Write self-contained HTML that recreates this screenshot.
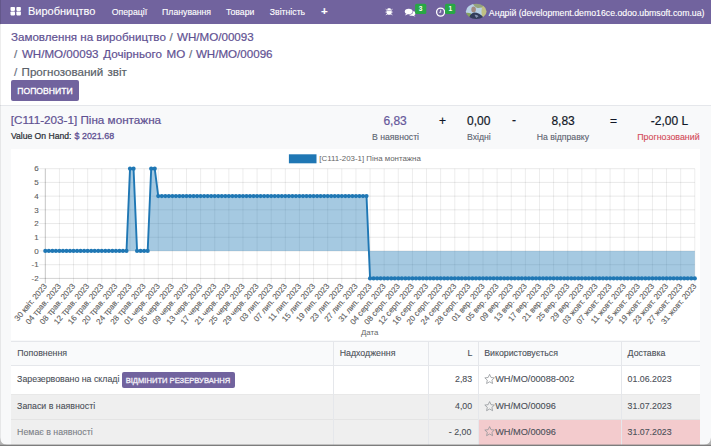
<!DOCTYPE html>
<html><head><meta charset="utf-8">
<style>
*{margin:0;padding:0;box-sizing:border-box}
html,body{width:711px;height:446px;overflow:hidden;background:#f8f9fa;font-family:"Liberation Sans",sans-serif;color:#374151}
.a{position:absolute;white-space:nowrap;line-height:1;-webkit-text-stroke:0.2px currentColor}
.lb{font-size:8.7px;color:#5c6370;-webkit-text-stroke:0.12px currentColor}
.tb .a{font-size:8.8px;color:#4b5058;-webkit-text-stroke:0.1px currentColor}
#nav{position:absolute;left:0;top:0;width:711px;height:24.5px;background:#71639e}
#nav .a{color:#fff;-webkit-text-stroke:0.12px currentColor}
#cp{position:absolute;left:0;top:24px;width:711px;height:81.9px;background:#fff;border-bottom:1px solid #e5e7eb}
.lk{color:#5f5192}
.sep{color:#6b7280}
.btn{position:absolute;background:#71639e;border-radius:2px}
#card{position:absolute;left:10.6px;top:148.5px;width:689.4px;height:191.8px;background:#fff}
svg{position:absolute;left:0;top:0}
.tk{font-family:"Liberation Sans",sans-serif;font-size:8px;fill:#5e5e5e;stroke:#5e5e5e;stroke-width:0.12px}
.lg{font-family:"Liberation Sans",sans-serif;font-size:7.9px;fill:#666}
#tbl{position:absolute;left:11px;top:340.5px;width:689.5px}
.row{position:absolute;left:11px;width:688.7px}
.vl{position:absolute;width:1px;background:#e5e7eb}
.hl{position:absolute;height:1px;background:#e5e7eb}
</style></head><body>
<div id="nav">
  <svg width="711" height="24" style="left:0;top:0">
    <rect x="10.5" y="6.9" width="4.5" height="4" rx="0.8" fill="#fff"/>
    <rect x="16.4" y="6.9" width="4.5" height="4" rx="0.8" fill="#fff"/>
    <rect x="10.5" y="11.5" width="4.5" height="3.9" rx="0.8" fill="#fff"/>
    <rect x="16.4" y="11.5" width="4.5" height="3.9" rx="0.8" fill="#fff"/>
  </svg>
  <div class="a" style="left:28px;top:6.3px;font-size:11px">Виробництво</div>
  <div class="a" style="left:111.8px;top:8.1px;font-size:8.7px">Операції</div>
  <div class="a" style="left:162.1px;top:8.1px;font-size:8.7px">Планування</div>
  <div class="a" style="left:225.9px;top:8.1px;font-size:8.7px">Товари</div>
  <div class="a" style="left:269.8px;top:8.1px;font-size:8.7px">Звітність</div>
  <div class="a" style="left:320.9px;top:6.3px;font-size:11.5px;font-weight:bold">+</div>
  <svg width="711" height="24" style="left:0;top:0">
    <!-- bug -->
    <g fill="#fff">
      <ellipse cx="389.1" cy="11.9" rx="2.5" ry="2.9"/>
      <rect x="387.4" y="8.2" width="3.4" height="1.9" rx="0.9"/>
      <path d="M385.7 9.3l1.9 1.3M392.5 9.3l-1.9 1.3M385.5 12.1h2M392.7 12.1h-2M385.8 14.9l1.9-1.3M392.4 14.9l-1.9-1.3" stroke="#fff" stroke-width="0.8"/>
    </g>
    <path d="M387 10.6h4.2" stroke="#71639e" stroke-width="0.5"/>
    <!-- chat -->
    <g fill="#fff">
      <ellipse cx="412" cy="13.4" rx="3.4" ry="2.4"/>
      <path d="M413.5 14.8 L415.5 16.7 L412.2 15.6z"/>
    </g>
    <ellipse cx="408.7" cy="11.5" rx="4.4" ry="3.2" fill="#71639e"/>
    <g fill="#fff">
      <ellipse cx="408.7" cy="11.4" rx="3.9" ry="2.75"/>
      <path d="M406.2 13.4 L405 15.6 L408.2 14z"/>
    </g>
    <rect x="415.1" y="3.7" width="11.2" height="10.4" rx="1.6" fill="#28a745"/>
    <text x="420.7" y="10.9" text-anchor="middle" font-size="6.6" font-weight="bold" fill="#fff" font-family="Liberation Sans">3</text>
    <!-- clock -->
    <circle cx="440.6" cy="12.1" r="4.0" fill="none" stroke="#fff" stroke-width="1.3"/>
    <path d="M440.7 9.8v2.5h-1.5" fill="none" stroke="#fff" stroke-width="0.8"/>
    <rect x="445" y="3.7" width="10.4" height="10.2" rx="1.6" fill="#28a745"/>
    <text x="450.3" y="10.9" text-anchor="middle" font-size="6.6" font-weight="bold" fill="#fff" font-family="Liberation Sans">1</text>
    <!-- avatar -->
    <defs><clipPath id="av"><ellipse cx="476.2" cy="11.45" rx="10.35" ry="7.65"/></clipPath>
    <filter id="bl" x="-10%" y="-10%" width="120%" height="120%"><feGaussianBlur stdDeviation="0.45"/></filter></defs>
    <g clip-path="url(#av)"><g filter="url(#bl)">
      <rect x="464" y="2" width="25" height="20" fill="#b9d1e6"/>
      <path d="M475 2 L489 2 L489 19 L483 19 Q480.5 12 482 8z" fill="#bfc084"/>
      <path d="M472 2 Q474 7 477.5 8 Q481 8.5 484 5.5 L485 2z" fill="#94a37c"/>
      <path d="M464 13.5 Q467.5 12 471 13.5 L471 21 L464 21z" fill="#86a35f"/>
      <ellipse cx="473.6" cy="9.4" rx="2.3" ry="2.9" fill="#a38b80"/>
      <path d="M468.5 21 Q469 13.8 474 12.6 Q479.5 12.6 483.5 17.5 L484 21z" fill="#303c5a"/>
      <path d="M474.5 14.8 Q477.5 14.2 478.5 16.2 L476.2 18z" fill="#8391ad"/>
    </g></g>
  </svg>
  <div class="a" style="left:488.8px;top:8.5px;font-size:8.76px">Андрій (development.demo16ce.odoo.ubmsoft.com.ua)</div>
</div>

<div id="cp"></div>
<div class="a lk" style="left:11px;top:31.1px;font-size:11.6px">Замовлення на виробництво</div>
<div class="a sep" style="left:169.5px;top:31.1px;font-size:11.6px">/</div>
<div class="a lk" style="left:177px;top:31.1px;font-size:11.6px">WH/MO/00093</div>
<div class="a sep" style="left:14.1px;top:48px;font-size:11.6px">/</div>
<div class="a lk" style="left:21.9px;top:48px;font-size:11.6px;word-spacing:1.5px">WH/MO/00093 Дочірнього МО</div>
<div class="a sep" style="left:189.1px;top:48px;font-size:11.6px">/</div>
<div class="a lk" style="left:195.9px;top:48px;font-size:11.6px">WH/MO/00096</div>
<div class="a sep" style="left:14.1px;top:65.5px;font-size:11.6px">/</div>
<div class="a" style="left:21.6px;top:65.5px;font-size:11.6px;color:#5a5f69;word-spacing:1px">Прогнозований звіт</div>
<div class="btn" style="left:10.8px;top:80.1px;width:68px;height:21.1px"></div>
<div class="a" style="left:17.3px;top:87px;font-size:8.6px;color:#fff;-webkit-text-stroke:0.32px currentColor">ПОПОВНИТИ</div>

<div class="a lk" style="left:10.7px;top:113.8px;font-size:11.7px">[C111-203-1] Піна монтажна</div>
<div class="a" style="left:10.9px;top:132.2px;font-size:8.6px;color:#2b2f36;-webkit-text-stroke:0.22px currentColor">Value On Hand:</div><div class="a lk" style="left:74.6px;top:132.2px;font-size:8.9px;-webkit-text-stroke:0.3px currentColor">$ 2021.68</div>

<div class="a lk" style="left:383.4px;top:114.5px;font-size:12px;color:#66589a">6,83</div>
<div class="a lb" style="left:372px;top:133px">В наявності</div>
<div class="a" style="left:439px;top:114.5px;font-size:12px;color:#111827">+</div>
<div class="a" style="left:467px;top:114.5px;font-size:12px;color:#111827">0,00</div>
<div class="a lb" style="left:467px;top:133px">Вхідні</div>
<div class="a" style="left:512px;top:113.8px;font-size:12px;color:#111827">-</div>
<div class="a" style="left:551.4px;top:114.5px;font-size:12px;color:#111827">8,83</div>
<div class="a lb" style="left:536.7px;top:133px">На відправку</div>
<div class="a" style="left:610px;top:114.5px;font-size:12px;color:#111827">=</div>
<div class="a" style="left:650.8px;top:114.5px;font-size:12px;color:#111827">-2,00 L</div>
<div class="a lb" style="left:637.2px;top:133px;font-size:8.9px;color:#d44c59">Прогнозований</div>

<div id="card"></div>
<svg width="711" height="446">
<line x1="39.3" y1="168.70" x2="694.80" y2="168.70" stroke="rgba(0,0,0,0.1)" stroke-width="0.9"/>
<line x1="39.3" y1="182.41" x2="694.80" y2="182.41" stroke="rgba(0,0,0,0.1)" stroke-width="0.9"/>
<line x1="39.3" y1="196.12" x2="694.80" y2="196.12" stroke="rgba(0,0,0,0.1)" stroke-width="0.9"/>
<line x1="39.3" y1="209.84" x2="694.80" y2="209.84" stroke="rgba(0,0,0,0.1)" stroke-width="0.9"/>
<line x1="39.3" y1="223.55" x2="694.80" y2="223.55" stroke="rgba(0,0,0,0.1)" stroke-width="0.9"/>
<line x1="39.3" y1="237.26" x2="694.80" y2="237.26" stroke="rgba(0,0,0,0.1)" stroke-width="0.9"/>
<line x1="39.3" y1="250.97" x2="694.80" y2="250.97" stroke="rgba(0,0,0,0.1)" stroke-width="0.9"/>
<line x1="39.3" y1="264.69" x2="694.80" y2="264.69" stroke="rgba(0,0,0,0.1)" stroke-width="0.9"/>
<line x1="39.3" y1="278.40" x2="694.80" y2="278.40" stroke="rgba(0,0,0,0.2)" stroke-width="0.9"/>
<line x1="45.30" y1="168.70" x2="45.30" y2="283.40" stroke="rgba(0,0,0,0.26)" stroke-width="0.9"/>
<line x1="59.42" y1="168.70" x2="59.42" y2="283.40" stroke="rgba(0,0,0,0.085)" stroke-width="0.9"/>
<line x1="73.54" y1="168.70" x2="73.54" y2="283.40" stroke="rgba(0,0,0,0.085)" stroke-width="0.9"/>
<line x1="87.66" y1="168.70" x2="87.66" y2="283.40" stroke="rgba(0,0,0,0.085)" stroke-width="0.9"/>
<line x1="101.78" y1="168.70" x2="101.78" y2="283.40" stroke="rgba(0,0,0,0.085)" stroke-width="0.9"/>
<line x1="115.90" y1="168.70" x2="115.90" y2="283.40" stroke="rgba(0,0,0,0.085)" stroke-width="0.9"/>
<line x1="130.02" y1="168.70" x2="130.02" y2="283.40" stroke="rgba(0,0,0,0.085)" stroke-width="0.9"/>
<line x1="144.14" y1="168.70" x2="144.14" y2="283.40" stroke="rgba(0,0,0,0.085)" stroke-width="0.9"/>
<line x1="158.26" y1="168.70" x2="158.26" y2="283.40" stroke="rgba(0,0,0,0.085)" stroke-width="0.9"/>
<line x1="172.38" y1="168.70" x2="172.38" y2="283.40" stroke="rgba(0,0,0,0.085)" stroke-width="0.9"/>
<line x1="186.50" y1="168.70" x2="186.50" y2="283.40" stroke="rgba(0,0,0,0.085)" stroke-width="0.9"/>
<line x1="200.62" y1="168.70" x2="200.62" y2="283.40" stroke="rgba(0,0,0,0.085)" stroke-width="0.9"/>
<line x1="214.73" y1="168.70" x2="214.73" y2="283.40" stroke="rgba(0,0,0,0.085)" stroke-width="0.9"/>
<line x1="228.85" y1="168.70" x2="228.85" y2="283.40" stroke="rgba(0,0,0,0.085)" stroke-width="0.9"/>
<line x1="242.97" y1="168.70" x2="242.97" y2="283.40" stroke="rgba(0,0,0,0.085)" stroke-width="0.9"/>
<line x1="257.09" y1="168.70" x2="257.09" y2="283.40" stroke="rgba(0,0,0,0.085)" stroke-width="0.9"/>
<line x1="271.21" y1="168.70" x2="271.21" y2="283.40" stroke="rgba(0,0,0,0.085)" stroke-width="0.9"/>
<line x1="285.33" y1="168.70" x2="285.33" y2="283.40" stroke="rgba(0,0,0,0.085)" stroke-width="0.9"/>
<line x1="299.45" y1="168.70" x2="299.45" y2="283.40" stroke="rgba(0,0,0,0.085)" stroke-width="0.9"/>
<line x1="313.57" y1="168.70" x2="313.57" y2="283.40" stroke="rgba(0,0,0,0.085)" stroke-width="0.9"/>
<line x1="327.69" y1="168.70" x2="327.69" y2="283.40" stroke="rgba(0,0,0,0.085)" stroke-width="0.9"/>
<line x1="341.81" y1="168.70" x2="341.81" y2="283.40" stroke="rgba(0,0,0,0.085)" stroke-width="0.9"/>
<line x1="355.93" y1="168.70" x2="355.93" y2="283.40" stroke="rgba(0,0,0,0.085)" stroke-width="0.9"/>
<line x1="370.05" y1="168.70" x2="370.05" y2="283.40" stroke="rgba(0,0,0,0.085)" stroke-width="0.9"/>
<line x1="384.17" y1="168.70" x2="384.17" y2="283.40" stroke="rgba(0,0,0,0.085)" stroke-width="0.9"/>
<line x1="398.29" y1="168.70" x2="398.29" y2="283.40" stroke="rgba(0,0,0,0.085)" stroke-width="0.9"/>
<line x1="412.41" y1="168.70" x2="412.41" y2="283.40" stroke="rgba(0,0,0,0.085)" stroke-width="0.9"/>
<line x1="426.53" y1="168.70" x2="426.53" y2="283.40" stroke="rgba(0,0,0,0.085)" stroke-width="0.9"/>
<line x1="440.65" y1="168.70" x2="440.65" y2="283.40" stroke="rgba(0,0,0,0.085)" stroke-width="0.9"/>
<line x1="454.77" y1="168.70" x2="454.77" y2="283.40" stroke="rgba(0,0,0,0.085)" stroke-width="0.9"/>
<line x1="468.89" y1="168.70" x2="468.89" y2="283.40" stroke="rgba(0,0,0,0.085)" stroke-width="0.9"/>
<line x1="483.01" y1="168.70" x2="483.01" y2="283.40" stroke="rgba(0,0,0,0.085)" stroke-width="0.9"/>
<line x1="497.13" y1="168.70" x2="497.13" y2="283.40" stroke="rgba(0,0,0,0.085)" stroke-width="0.9"/>
<line x1="511.25" y1="168.70" x2="511.25" y2="283.40" stroke="rgba(0,0,0,0.085)" stroke-width="0.9"/>
<line x1="525.37" y1="168.70" x2="525.37" y2="283.40" stroke="rgba(0,0,0,0.085)" stroke-width="0.9"/>
<line x1="539.48" y1="168.70" x2="539.48" y2="283.40" stroke="rgba(0,0,0,0.085)" stroke-width="0.9"/>
<line x1="553.60" y1="168.70" x2="553.60" y2="283.40" stroke="rgba(0,0,0,0.085)" stroke-width="0.9"/>
<line x1="567.72" y1="168.70" x2="567.72" y2="283.40" stroke="rgba(0,0,0,0.085)" stroke-width="0.9"/>
<line x1="581.84" y1="168.70" x2="581.84" y2="283.40" stroke="rgba(0,0,0,0.085)" stroke-width="0.9"/>
<line x1="595.96" y1="168.70" x2="595.96" y2="283.40" stroke="rgba(0,0,0,0.085)" stroke-width="0.9"/>
<line x1="610.08" y1="168.70" x2="610.08" y2="283.40" stroke="rgba(0,0,0,0.085)" stroke-width="0.9"/>
<line x1="624.20" y1="168.70" x2="624.20" y2="283.40" stroke="rgba(0,0,0,0.085)" stroke-width="0.9"/>
<line x1="638.32" y1="168.70" x2="638.32" y2="283.40" stroke="rgba(0,0,0,0.085)" stroke-width="0.9"/>
<line x1="652.44" y1="168.70" x2="652.44" y2="283.40" stroke="rgba(0,0,0,0.085)" stroke-width="0.9"/>
<line x1="666.56" y1="168.70" x2="666.56" y2="283.40" stroke="rgba(0,0,0,0.085)" stroke-width="0.9"/>
<line x1="680.68" y1="168.70" x2="680.68" y2="283.40" stroke="rgba(0,0,0,0.085)" stroke-width="0.9"/>
<line x1="694.80" y1="168.70" x2="694.80" y2="283.40" stroke="rgba(0,0,0,0.085)" stroke-width="0.9"/>
<text x="38.6" y="168.70" dy="0.34em" text-anchor="end" class="tk">6</text>
<text x="38.6" y="182.41" dy="0.34em" text-anchor="end" class="tk">5</text>
<text x="38.6" y="196.12" dy="0.34em" text-anchor="end" class="tk">4</text>
<text x="38.6" y="209.84" dy="0.34em" text-anchor="end" class="tk">3</text>
<text x="38.6" y="223.55" dy="0.34em" text-anchor="end" class="tk">2</text>
<text x="38.6" y="237.26" dy="0.34em" text-anchor="end" class="tk">1</text>
<text x="38.6" y="250.97" dy="0.34em" text-anchor="end" class="tk">0</text>
<text x="38.6" y="264.69" dy="0.34em" text-anchor="end" class="tk">-1</text>
<text x="38.6" y="278.40" dy="0.34em" text-anchor="end" class="tk">-2</text>
<path d="M45.30,250.97 L45.30,250.97 L48.83,250.97 L52.36,250.97 L55.89,250.97 L59.42,250.97 L62.95,250.97 L66.48,250.97 L70.01,250.97 L73.54,250.97 L77.07,250.97 L80.60,250.97 L84.13,250.97 L87.66,250.97 L91.19,250.97 L94.72,250.97 L98.25,250.97 L101.78,250.97 L105.31,250.97 L108.84,250.97 L112.37,250.97 L115.90,250.97 L119.43,250.97 L122.96,250.97 L126.49,250.97 L130.02,168.70 L133.55,168.70 L137.08,250.97 L140.61,250.97 L144.14,250.97 L147.67,250.97 L151.20,168.70 L154.73,168.70 L158.26,196.12 L161.79,196.12 L165.32,196.12 L168.85,196.12 L172.38,196.12 L175.91,196.12 L179.44,196.12 L182.97,196.12 L186.50,196.12 L190.03,196.12 L193.56,196.12 L197.09,196.12 L200.62,196.12 L204.15,196.12 L207.68,196.12 L211.20,196.12 L214.73,196.12 L218.26,196.12 L221.79,196.12 L225.32,196.12 L228.85,196.12 L232.38,196.12 L235.91,196.12 L239.44,196.12 L242.97,196.12 L246.50,196.12 L250.03,196.12 L253.56,196.12 L257.09,196.12 L260.62,196.12 L264.15,196.12 L267.68,196.12 L271.21,196.12 L274.74,196.12 L278.27,196.12 L281.80,196.12 L285.33,196.12 L288.86,196.12 L292.39,196.12 L295.92,196.12 L299.45,196.12 L302.98,196.12 L306.51,196.12 L310.04,196.12 L313.57,196.12 L317.10,196.12 L320.63,196.12 L324.16,196.12 L327.69,196.12 L331.22,196.12 L334.75,196.12 L338.28,196.12 L341.81,196.12 L345.34,196.12 L348.87,196.12 L352.40,196.12 L355.93,196.12 L359.46,196.12 L362.99,196.12 L366.52,196.12 L370.05,278.40 L373.58,278.40 L377.11,278.40 L380.64,278.40 L384.17,278.40 L387.70,278.40 L391.23,278.40 L394.76,278.40 L398.29,278.40 L401.82,278.40 L405.35,278.40 L408.88,278.40 L412.41,278.40 L415.94,278.40 L419.47,278.40 L423.00,278.40 L426.53,278.40 L430.06,278.40 L433.59,278.40 L437.12,278.40 L440.65,278.40 L444.18,278.40 L447.71,278.40 L451.24,278.40 L454.77,278.40 L458.30,278.40 L461.83,278.40 L465.36,278.40 L468.89,278.40 L472.42,278.40 L475.95,278.40 L479.48,278.40 L483.01,278.40 L486.54,278.40 L490.07,278.40 L493.60,278.40 L497.13,278.40 L500.66,278.40 L504.19,278.40 L507.72,278.40 L511.25,278.40 L514.78,278.40 L518.31,278.40 L521.84,278.40 L525.37,278.40 L528.90,278.40 L532.42,278.40 L535.95,278.40 L539.48,278.40 L543.01,278.40 L546.54,278.40 L550.07,278.40 L553.60,278.40 L557.13,278.40 L560.66,278.40 L564.19,278.40 L567.72,278.40 L571.25,278.40 L574.78,278.40 L578.31,278.40 L581.84,278.40 L585.37,278.40 L588.90,278.40 L592.43,278.40 L595.96,278.40 L599.49,278.40 L603.02,278.40 L606.55,278.40 L610.08,278.40 L613.61,278.40 L617.14,278.40 L620.67,278.40 L624.20,278.40 L627.73,278.40 L631.26,278.40 L634.79,278.40 L638.32,278.40 L641.85,278.40 L645.38,278.40 L648.91,278.40 L652.44,278.40 L655.97,278.40 L659.50,278.40 L663.03,278.40 L666.56,278.40 L670.09,278.40 L673.62,278.40 L677.15,278.40 L680.68,278.40 L684.21,278.40 L687.74,278.40 L691.27,278.40 L694.80,278.40 L694.80,250.97 Z" fill="rgba(31,119,180,0.4)"/>
<path d="M45.30,250.97 L48.83,250.97 L52.36,250.97 L55.89,250.97 L59.42,250.97 L62.95,250.97 L66.48,250.97 L70.01,250.97 L73.54,250.97 L77.07,250.97 L80.60,250.97 L84.13,250.97 L87.66,250.97 L91.19,250.97 L94.72,250.97 L98.25,250.97 L101.78,250.97 L105.31,250.97 L108.84,250.97 L112.37,250.97 L115.90,250.97 L119.43,250.97 L122.96,250.97 L126.49,250.97 L130.02,168.70 L133.55,168.70 L137.08,250.97 L140.61,250.97 L144.14,250.97 L147.67,250.97 L151.20,168.70 L154.73,168.70 L158.26,196.12 L161.79,196.12 L165.32,196.12 L168.85,196.12 L172.38,196.12 L175.91,196.12 L179.44,196.12 L182.97,196.12 L186.50,196.12 L190.03,196.12 L193.56,196.12 L197.09,196.12 L200.62,196.12 L204.15,196.12 L207.68,196.12 L211.20,196.12 L214.73,196.12 L218.26,196.12 L221.79,196.12 L225.32,196.12 L228.85,196.12 L232.38,196.12 L235.91,196.12 L239.44,196.12 L242.97,196.12 L246.50,196.12 L250.03,196.12 L253.56,196.12 L257.09,196.12 L260.62,196.12 L264.15,196.12 L267.68,196.12 L271.21,196.12 L274.74,196.12 L278.27,196.12 L281.80,196.12 L285.33,196.12 L288.86,196.12 L292.39,196.12 L295.92,196.12 L299.45,196.12 L302.98,196.12 L306.51,196.12 L310.04,196.12 L313.57,196.12 L317.10,196.12 L320.63,196.12 L324.16,196.12 L327.69,196.12 L331.22,196.12 L334.75,196.12 L338.28,196.12 L341.81,196.12 L345.34,196.12 L348.87,196.12 L352.40,196.12 L355.93,196.12 L359.46,196.12 L362.99,196.12 L366.52,196.12 L370.05,278.40 L373.58,278.40 L377.11,278.40 L380.64,278.40 L384.17,278.40 L387.70,278.40 L391.23,278.40 L394.76,278.40 L398.29,278.40 L401.82,278.40 L405.35,278.40 L408.88,278.40 L412.41,278.40 L415.94,278.40 L419.47,278.40 L423.00,278.40 L426.53,278.40 L430.06,278.40 L433.59,278.40 L437.12,278.40 L440.65,278.40 L444.18,278.40 L447.71,278.40 L451.24,278.40 L454.77,278.40 L458.30,278.40 L461.83,278.40 L465.36,278.40 L468.89,278.40 L472.42,278.40 L475.95,278.40 L479.48,278.40 L483.01,278.40 L486.54,278.40 L490.07,278.40 L493.60,278.40 L497.13,278.40 L500.66,278.40 L504.19,278.40 L507.72,278.40 L511.25,278.40 L514.78,278.40 L518.31,278.40 L521.84,278.40 L525.37,278.40 L528.90,278.40 L532.42,278.40 L535.95,278.40 L539.48,278.40 L543.01,278.40 L546.54,278.40 L550.07,278.40 L553.60,278.40 L557.13,278.40 L560.66,278.40 L564.19,278.40 L567.72,278.40 L571.25,278.40 L574.78,278.40 L578.31,278.40 L581.84,278.40 L585.37,278.40 L588.90,278.40 L592.43,278.40 L595.96,278.40 L599.49,278.40 L603.02,278.40 L606.55,278.40 L610.08,278.40 L613.61,278.40 L617.14,278.40 L620.67,278.40 L624.20,278.40 L627.73,278.40 L631.26,278.40 L634.79,278.40 L638.32,278.40 L641.85,278.40 L645.38,278.40 L648.91,278.40 L652.44,278.40 L655.97,278.40 L659.50,278.40 L663.03,278.40 L666.56,278.40 L670.09,278.40 L673.62,278.40 L677.15,278.40 L680.68,278.40 L684.21,278.40 L687.74,278.40 L691.27,278.40 L694.80,278.40" fill="none" stroke="#1f77b4" stroke-width="1.9" stroke-linejoin="round"/>
<circle cx="45.30" cy="250.97" r="2.1" fill="#1f77b4"/>
<circle cx="48.83" cy="250.97" r="2.1" fill="#1f77b4"/>
<circle cx="52.36" cy="250.97" r="2.1" fill="#1f77b4"/>
<circle cx="55.89" cy="250.97" r="2.1" fill="#1f77b4"/>
<circle cx="59.42" cy="250.97" r="2.1" fill="#1f77b4"/>
<circle cx="62.95" cy="250.97" r="2.1" fill="#1f77b4"/>
<circle cx="66.48" cy="250.97" r="2.1" fill="#1f77b4"/>
<circle cx="70.01" cy="250.97" r="2.1" fill="#1f77b4"/>
<circle cx="73.54" cy="250.97" r="2.1" fill="#1f77b4"/>
<circle cx="77.07" cy="250.97" r="2.1" fill="#1f77b4"/>
<circle cx="80.60" cy="250.97" r="2.1" fill="#1f77b4"/>
<circle cx="84.13" cy="250.97" r="2.1" fill="#1f77b4"/>
<circle cx="87.66" cy="250.97" r="2.1" fill="#1f77b4"/>
<circle cx="91.19" cy="250.97" r="2.1" fill="#1f77b4"/>
<circle cx="94.72" cy="250.97" r="2.1" fill="#1f77b4"/>
<circle cx="98.25" cy="250.97" r="2.1" fill="#1f77b4"/>
<circle cx="101.78" cy="250.97" r="2.1" fill="#1f77b4"/>
<circle cx="105.31" cy="250.97" r="2.1" fill="#1f77b4"/>
<circle cx="108.84" cy="250.97" r="2.1" fill="#1f77b4"/>
<circle cx="112.37" cy="250.97" r="2.1" fill="#1f77b4"/>
<circle cx="115.90" cy="250.97" r="2.1" fill="#1f77b4"/>
<circle cx="119.43" cy="250.97" r="2.1" fill="#1f77b4"/>
<circle cx="122.96" cy="250.97" r="2.1" fill="#1f77b4"/>
<circle cx="126.49" cy="250.97" r="2.1" fill="#1f77b4"/>
<circle cx="130.02" cy="168.70" r="2.1" fill="#1f77b4"/>
<circle cx="133.55" cy="168.70" r="2.1" fill="#1f77b4"/>
<circle cx="137.08" cy="250.97" r="2.1" fill="#1f77b4"/>
<circle cx="140.61" cy="250.97" r="2.1" fill="#1f77b4"/>
<circle cx="144.14" cy="250.97" r="2.1" fill="#1f77b4"/>
<circle cx="147.67" cy="250.97" r="2.1" fill="#1f77b4"/>
<circle cx="151.20" cy="168.70" r="2.1" fill="#1f77b4"/>
<circle cx="154.73" cy="168.70" r="2.1" fill="#1f77b4"/>
<circle cx="158.26" cy="196.12" r="2.1" fill="#1f77b4"/>
<circle cx="161.79" cy="196.12" r="2.1" fill="#1f77b4"/>
<circle cx="165.32" cy="196.12" r="2.1" fill="#1f77b4"/>
<circle cx="168.85" cy="196.12" r="2.1" fill="#1f77b4"/>
<circle cx="172.38" cy="196.12" r="2.1" fill="#1f77b4"/>
<circle cx="175.91" cy="196.12" r="2.1" fill="#1f77b4"/>
<circle cx="179.44" cy="196.12" r="2.1" fill="#1f77b4"/>
<circle cx="182.97" cy="196.12" r="2.1" fill="#1f77b4"/>
<circle cx="186.50" cy="196.12" r="2.1" fill="#1f77b4"/>
<circle cx="190.03" cy="196.12" r="2.1" fill="#1f77b4"/>
<circle cx="193.56" cy="196.12" r="2.1" fill="#1f77b4"/>
<circle cx="197.09" cy="196.12" r="2.1" fill="#1f77b4"/>
<circle cx="200.62" cy="196.12" r="2.1" fill="#1f77b4"/>
<circle cx="204.15" cy="196.12" r="2.1" fill="#1f77b4"/>
<circle cx="207.68" cy="196.12" r="2.1" fill="#1f77b4"/>
<circle cx="211.20" cy="196.12" r="2.1" fill="#1f77b4"/>
<circle cx="214.73" cy="196.12" r="2.1" fill="#1f77b4"/>
<circle cx="218.26" cy="196.12" r="2.1" fill="#1f77b4"/>
<circle cx="221.79" cy="196.12" r="2.1" fill="#1f77b4"/>
<circle cx="225.32" cy="196.12" r="2.1" fill="#1f77b4"/>
<circle cx="228.85" cy="196.12" r="2.1" fill="#1f77b4"/>
<circle cx="232.38" cy="196.12" r="2.1" fill="#1f77b4"/>
<circle cx="235.91" cy="196.12" r="2.1" fill="#1f77b4"/>
<circle cx="239.44" cy="196.12" r="2.1" fill="#1f77b4"/>
<circle cx="242.97" cy="196.12" r="2.1" fill="#1f77b4"/>
<circle cx="246.50" cy="196.12" r="2.1" fill="#1f77b4"/>
<circle cx="250.03" cy="196.12" r="2.1" fill="#1f77b4"/>
<circle cx="253.56" cy="196.12" r="2.1" fill="#1f77b4"/>
<circle cx="257.09" cy="196.12" r="2.1" fill="#1f77b4"/>
<circle cx="260.62" cy="196.12" r="2.1" fill="#1f77b4"/>
<circle cx="264.15" cy="196.12" r="2.1" fill="#1f77b4"/>
<circle cx="267.68" cy="196.12" r="2.1" fill="#1f77b4"/>
<circle cx="271.21" cy="196.12" r="2.1" fill="#1f77b4"/>
<circle cx="274.74" cy="196.12" r="2.1" fill="#1f77b4"/>
<circle cx="278.27" cy="196.12" r="2.1" fill="#1f77b4"/>
<circle cx="281.80" cy="196.12" r="2.1" fill="#1f77b4"/>
<circle cx="285.33" cy="196.12" r="2.1" fill="#1f77b4"/>
<circle cx="288.86" cy="196.12" r="2.1" fill="#1f77b4"/>
<circle cx="292.39" cy="196.12" r="2.1" fill="#1f77b4"/>
<circle cx="295.92" cy="196.12" r="2.1" fill="#1f77b4"/>
<circle cx="299.45" cy="196.12" r="2.1" fill="#1f77b4"/>
<circle cx="302.98" cy="196.12" r="2.1" fill="#1f77b4"/>
<circle cx="306.51" cy="196.12" r="2.1" fill="#1f77b4"/>
<circle cx="310.04" cy="196.12" r="2.1" fill="#1f77b4"/>
<circle cx="313.57" cy="196.12" r="2.1" fill="#1f77b4"/>
<circle cx="317.10" cy="196.12" r="2.1" fill="#1f77b4"/>
<circle cx="320.63" cy="196.12" r="2.1" fill="#1f77b4"/>
<circle cx="324.16" cy="196.12" r="2.1" fill="#1f77b4"/>
<circle cx="327.69" cy="196.12" r="2.1" fill="#1f77b4"/>
<circle cx="331.22" cy="196.12" r="2.1" fill="#1f77b4"/>
<circle cx="334.75" cy="196.12" r="2.1" fill="#1f77b4"/>
<circle cx="338.28" cy="196.12" r="2.1" fill="#1f77b4"/>
<circle cx="341.81" cy="196.12" r="2.1" fill="#1f77b4"/>
<circle cx="345.34" cy="196.12" r="2.1" fill="#1f77b4"/>
<circle cx="348.87" cy="196.12" r="2.1" fill="#1f77b4"/>
<circle cx="352.40" cy="196.12" r="2.1" fill="#1f77b4"/>
<circle cx="355.93" cy="196.12" r="2.1" fill="#1f77b4"/>
<circle cx="359.46" cy="196.12" r="2.1" fill="#1f77b4"/>
<circle cx="362.99" cy="196.12" r="2.1" fill="#1f77b4"/>
<circle cx="366.52" cy="196.12" r="2.1" fill="#1f77b4"/>
<circle cx="370.05" cy="278.40" r="2.1" fill="#1f77b4"/>
<circle cx="373.58" cy="278.40" r="2.1" fill="#1f77b4"/>
<circle cx="377.11" cy="278.40" r="2.1" fill="#1f77b4"/>
<circle cx="380.64" cy="278.40" r="2.1" fill="#1f77b4"/>
<circle cx="384.17" cy="278.40" r="2.1" fill="#1f77b4"/>
<circle cx="387.70" cy="278.40" r="2.1" fill="#1f77b4"/>
<circle cx="391.23" cy="278.40" r="2.1" fill="#1f77b4"/>
<circle cx="394.76" cy="278.40" r="2.1" fill="#1f77b4"/>
<circle cx="398.29" cy="278.40" r="2.1" fill="#1f77b4"/>
<circle cx="401.82" cy="278.40" r="2.1" fill="#1f77b4"/>
<circle cx="405.35" cy="278.40" r="2.1" fill="#1f77b4"/>
<circle cx="408.88" cy="278.40" r="2.1" fill="#1f77b4"/>
<circle cx="412.41" cy="278.40" r="2.1" fill="#1f77b4"/>
<circle cx="415.94" cy="278.40" r="2.1" fill="#1f77b4"/>
<circle cx="419.47" cy="278.40" r="2.1" fill="#1f77b4"/>
<circle cx="423.00" cy="278.40" r="2.1" fill="#1f77b4"/>
<circle cx="426.53" cy="278.40" r="2.1" fill="#1f77b4"/>
<circle cx="430.06" cy="278.40" r="2.1" fill="#1f77b4"/>
<circle cx="433.59" cy="278.40" r="2.1" fill="#1f77b4"/>
<circle cx="437.12" cy="278.40" r="2.1" fill="#1f77b4"/>
<circle cx="440.65" cy="278.40" r="2.1" fill="#1f77b4"/>
<circle cx="444.18" cy="278.40" r="2.1" fill="#1f77b4"/>
<circle cx="447.71" cy="278.40" r="2.1" fill="#1f77b4"/>
<circle cx="451.24" cy="278.40" r="2.1" fill="#1f77b4"/>
<circle cx="454.77" cy="278.40" r="2.1" fill="#1f77b4"/>
<circle cx="458.30" cy="278.40" r="2.1" fill="#1f77b4"/>
<circle cx="461.83" cy="278.40" r="2.1" fill="#1f77b4"/>
<circle cx="465.36" cy="278.40" r="2.1" fill="#1f77b4"/>
<circle cx="468.89" cy="278.40" r="2.1" fill="#1f77b4"/>
<circle cx="472.42" cy="278.40" r="2.1" fill="#1f77b4"/>
<circle cx="475.95" cy="278.40" r="2.1" fill="#1f77b4"/>
<circle cx="479.48" cy="278.40" r="2.1" fill="#1f77b4"/>
<circle cx="483.01" cy="278.40" r="2.1" fill="#1f77b4"/>
<circle cx="486.54" cy="278.40" r="2.1" fill="#1f77b4"/>
<circle cx="490.07" cy="278.40" r="2.1" fill="#1f77b4"/>
<circle cx="493.60" cy="278.40" r="2.1" fill="#1f77b4"/>
<circle cx="497.13" cy="278.40" r="2.1" fill="#1f77b4"/>
<circle cx="500.66" cy="278.40" r="2.1" fill="#1f77b4"/>
<circle cx="504.19" cy="278.40" r="2.1" fill="#1f77b4"/>
<circle cx="507.72" cy="278.40" r="2.1" fill="#1f77b4"/>
<circle cx="511.25" cy="278.40" r="2.1" fill="#1f77b4"/>
<circle cx="514.78" cy="278.40" r="2.1" fill="#1f77b4"/>
<circle cx="518.31" cy="278.40" r="2.1" fill="#1f77b4"/>
<circle cx="521.84" cy="278.40" r="2.1" fill="#1f77b4"/>
<circle cx="525.37" cy="278.40" r="2.1" fill="#1f77b4"/>
<circle cx="528.90" cy="278.40" r="2.1" fill="#1f77b4"/>
<circle cx="532.42" cy="278.40" r="2.1" fill="#1f77b4"/>
<circle cx="535.95" cy="278.40" r="2.1" fill="#1f77b4"/>
<circle cx="539.48" cy="278.40" r="2.1" fill="#1f77b4"/>
<circle cx="543.01" cy="278.40" r="2.1" fill="#1f77b4"/>
<circle cx="546.54" cy="278.40" r="2.1" fill="#1f77b4"/>
<circle cx="550.07" cy="278.40" r="2.1" fill="#1f77b4"/>
<circle cx="553.60" cy="278.40" r="2.1" fill="#1f77b4"/>
<circle cx="557.13" cy="278.40" r="2.1" fill="#1f77b4"/>
<circle cx="560.66" cy="278.40" r="2.1" fill="#1f77b4"/>
<circle cx="564.19" cy="278.40" r="2.1" fill="#1f77b4"/>
<circle cx="567.72" cy="278.40" r="2.1" fill="#1f77b4"/>
<circle cx="571.25" cy="278.40" r="2.1" fill="#1f77b4"/>
<circle cx="574.78" cy="278.40" r="2.1" fill="#1f77b4"/>
<circle cx="578.31" cy="278.40" r="2.1" fill="#1f77b4"/>
<circle cx="581.84" cy="278.40" r="2.1" fill="#1f77b4"/>
<circle cx="585.37" cy="278.40" r="2.1" fill="#1f77b4"/>
<circle cx="588.90" cy="278.40" r="2.1" fill="#1f77b4"/>
<circle cx="592.43" cy="278.40" r="2.1" fill="#1f77b4"/>
<circle cx="595.96" cy="278.40" r="2.1" fill="#1f77b4"/>
<circle cx="599.49" cy="278.40" r="2.1" fill="#1f77b4"/>
<circle cx="603.02" cy="278.40" r="2.1" fill="#1f77b4"/>
<circle cx="606.55" cy="278.40" r="2.1" fill="#1f77b4"/>
<circle cx="610.08" cy="278.40" r="2.1" fill="#1f77b4"/>
<circle cx="613.61" cy="278.40" r="2.1" fill="#1f77b4"/>
<circle cx="617.14" cy="278.40" r="2.1" fill="#1f77b4"/>
<circle cx="620.67" cy="278.40" r="2.1" fill="#1f77b4"/>
<circle cx="624.20" cy="278.40" r="2.1" fill="#1f77b4"/>
<circle cx="627.73" cy="278.40" r="2.1" fill="#1f77b4"/>
<circle cx="631.26" cy="278.40" r="2.1" fill="#1f77b4"/>
<circle cx="634.79" cy="278.40" r="2.1" fill="#1f77b4"/>
<circle cx="638.32" cy="278.40" r="2.1" fill="#1f77b4"/>
<circle cx="641.85" cy="278.40" r="2.1" fill="#1f77b4"/>
<circle cx="645.38" cy="278.40" r="2.1" fill="#1f77b4"/>
<circle cx="648.91" cy="278.40" r="2.1" fill="#1f77b4"/>
<circle cx="652.44" cy="278.40" r="2.1" fill="#1f77b4"/>
<circle cx="655.97" cy="278.40" r="2.1" fill="#1f77b4"/>
<circle cx="659.50" cy="278.40" r="2.1" fill="#1f77b4"/>
<circle cx="663.03" cy="278.40" r="2.1" fill="#1f77b4"/>
<circle cx="666.56" cy="278.40" r="2.1" fill="#1f77b4"/>
<circle cx="670.09" cy="278.40" r="2.1" fill="#1f77b4"/>
<circle cx="673.62" cy="278.40" r="2.1" fill="#1f77b4"/>
<circle cx="677.15" cy="278.40" r="2.1" fill="#1f77b4"/>
<circle cx="680.68" cy="278.40" r="2.1" fill="#1f77b4"/>
<circle cx="684.21" cy="278.40" r="2.1" fill="#1f77b4"/>
<circle cx="687.74" cy="278.40" r="2.1" fill="#1f77b4"/>
<circle cx="691.27" cy="278.40" r="2.1" fill="#1f77b4"/>
<circle cx="694.80" cy="278.40" r="2.1" fill="#1f77b4"/>
<text x="45.30" y="284.70" text-anchor="end" transform="rotate(-50 45.30 284.70)" class="tk" dy="0.34em">30 квіт. 2023</text>
<text x="59.42" y="284.70" text-anchor="end" transform="rotate(-50 59.42 284.70)" class="tk" dy="0.34em">04 трав. 2023</text>
<text x="73.54" y="284.70" text-anchor="end" transform="rotate(-50 73.54 284.70)" class="tk" dy="0.34em">08 трав. 2023</text>
<text x="87.66" y="284.70" text-anchor="end" transform="rotate(-50 87.66 284.70)" class="tk" dy="0.34em">12 трав. 2023</text>
<text x="101.78" y="284.70" text-anchor="end" transform="rotate(-50 101.78 284.70)" class="tk" dy="0.34em">16 трав. 2023</text>
<text x="115.90" y="284.70" text-anchor="end" transform="rotate(-50 115.90 284.70)" class="tk" dy="0.34em">20 трав. 2023</text>
<text x="130.02" y="284.70" text-anchor="end" transform="rotate(-50 130.02 284.70)" class="tk" dy="0.34em">24 трав. 2023</text>
<text x="144.14" y="284.70" text-anchor="end" transform="rotate(-50 144.14 284.70)" class="tk" dy="0.34em">28 трав. 2023</text>
<text x="158.26" y="284.70" text-anchor="end" transform="rotate(-50 158.26 284.70)" class="tk" dy="0.34em">01 черв. 2023</text>
<text x="172.38" y="284.70" text-anchor="end" transform="rotate(-50 172.38 284.70)" class="tk" dy="0.34em">05 черв. 2023</text>
<text x="186.50" y="284.70" text-anchor="end" transform="rotate(-50 186.50 284.70)" class="tk" dy="0.34em">09 черв. 2023</text>
<text x="200.62" y="284.70" text-anchor="end" transform="rotate(-50 200.62 284.70)" class="tk" dy="0.34em">13 черв. 2023</text>
<text x="214.73" y="284.70" text-anchor="end" transform="rotate(-50 214.73 284.70)" class="tk" dy="0.34em">17 черв. 2023</text>
<text x="228.85" y="284.70" text-anchor="end" transform="rotate(-50 228.85 284.70)" class="tk" dy="0.34em">21 черв. 2023</text>
<text x="242.97" y="284.70" text-anchor="end" transform="rotate(-50 242.97 284.70)" class="tk" dy="0.34em">25 черв. 2023</text>
<text x="257.09" y="284.70" text-anchor="end" transform="rotate(-50 257.09 284.70)" class="tk" dy="0.34em">29 черв. 2023</text>
<text x="271.21" y="284.70" text-anchor="end" transform="rotate(-50 271.21 284.70)" class="tk" dy="0.34em">03 лип. 2023</text>
<text x="285.33" y="284.70" text-anchor="end" transform="rotate(-50 285.33 284.70)" class="tk" dy="0.34em">07 лип. 2023</text>
<text x="299.45" y="284.70" text-anchor="end" transform="rotate(-50 299.45 284.70)" class="tk" dy="0.34em">11 лип. 2023</text>
<text x="313.57" y="284.70" text-anchor="end" transform="rotate(-50 313.57 284.70)" class="tk" dy="0.34em">15 лип. 2023</text>
<text x="327.69" y="284.70" text-anchor="end" transform="rotate(-50 327.69 284.70)" class="tk" dy="0.34em">19 лип. 2023</text>
<text x="341.81" y="284.70" text-anchor="end" transform="rotate(-50 341.81 284.70)" class="tk" dy="0.34em">23 лип. 2023</text>
<text x="355.93" y="284.70" text-anchor="end" transform="rotate(-50 355.93 284.70)" class="tk" dy="0.34em">27 лип. 2023</text>
<text x="370.05" y="284.70" text-anchor="end" transform="rotate(-50 370.05 284.70)" class="tk" dy="0.34em">31 лип. 2023</text>
<text x="384.17" y="284.70" text-anchor="end" transform="rotate(-50 384.17 284.70)" class="tk" dy="0.34em">04 серп. 2023</text>
<text x="398.29" y="284.70" text-anchor="end" transform="rotate(-50 398.29 284.70)" class="tk" dy="0.34em">08 серп. 2023</text>
<text x="412.41" y="284.70" text-anchor="end" transform="rotate(-50 412.41 284.70)" class="tk" dy="0.34em">12 серп. 2023</text>
<text x="426.53" y="284.70" text-anchor="end" transform="rotate(-50 426.53 284.70)" class="tk" dy="0.34em">16 серп. 2023</text>
<text x="440.65" y="284.70" text-anchor="end" transform="rotate(-50 440.65 284.70)" class="tk" dy="0.34em">20 серп. 2023</text>
<text x="454.77" y="284.70" text-anchor="end" transform="rotate(-50 454.77 284.70)" class="tk" dy="0.34em">24 серп. 2023</text>
<text x="468.89" y="284.70" text-anchor="end" transform="rotate(-50 468.89 284.70)" class="tk" dy="0.34em">28 серп. 2023</text>
<text x="483.01" y="284.70" text-anchor="end" transform="rotate(-50 483.01 284.70)" class="tk" dy="0.34em">01 вер. 2023</text>
<text x="497.13" y="284.70" text-anchor="end" transform="rotate(-50 497.13 284.70)" class="tk" dy="0.34em">05 вер. 2023</text>
<text x="511.25" y="284.70" text-anchor="end" transform="rotate(-50 511.25 284.70)" class="tk" dy="0.34em">09 вер. 2023</text>
<text x="525.37" y="284.70" text-anchor="end" transform="rotate(-50 525.37 284.70)" class="tk" dy="0.34em">13 вер. 2023</text>
<text x="539.48" y="284.70" text-anchor="end" transform="rotate(-50 539.48 284.70)" class="tk" dy="0.34em">17 вер. 2023</text>
<text x="553.60" y="284.70" text-anchor="end" transform="rotate(-50 553.60 284.70)" class="tk" dy="0.34em">21 вер. 2023</text>
<text x="567.72" y="284.70" text-anchor="end" transform="rotate(-50 567.72 284.70)" class="tk" dy="0.34em">25 вер. 2023</text>
<text x="581.84" y="284.70" text-anchor="end" transform="rotate(-50 581.84 284.70)" class="tk" dy="0.34em">29 вер. 2023</text>
<text x="595.96" y="284.70" text-anchor="end" transform="rotate(-50 595.96 284.70)" class="tk" dy="0.34em">03 жовт. 2023</text>
<text x="610.08" y="284.70" text-anchor="end" transform="rotate(-50 610.08 284.70)" class="tk" dy="0.34em">07 жовт. 2023</text>
<text x="624.20" y="284.70" text-anchor="end" transform="rotate(-50 624.20 284.70)" class="tk" dy="0.34em">11 жовт. 2023</text>
<text x="638.32" y="284.70" text-anchor="end" transform="rotate(-50 638.32 284.70)" class="tk" dy="0.34em">15 жовт. 2023</text>
<text x="652.44" y="284.70" text-anchor="end" transform="rotate(-50 652.44 284.70)" class="tk" dy="0.34em">19 жовт. 2023</text>
<text x="666.56" y="284.70" text-anchor="end" transform="rotate(-50 666.56 284.70)" class="tk" dy="0.34em">23 жовт. 2023</text>
<text x="680.68" y="284.70" text-anchor="end" transform="rotate(-50 680.68 284.70)" class="tk" dy="0.34em">27 жовт. 2023</text>
<text x="694.80" y="284.70" text-anchor="end" transform="rotate(-50 694.80 284.70)" class="tk" dy="0.34em">31 жовт. 2023</text>
<rect x="288.9" y="154.3" width="27.6" height="9" fill="#1f77b4"/>
<text x="319.3" y="161" class="lg">[C111-203-1] Піна монтажна</text>
<text x="361" y="335.2" class="lg">Дата</text>
</svg>

<!-- table -->
<div class="row" style="top:340.5px;height:24.5px;background:#f9fafb;border-top:1px solid #e5e7eb"></div>
<div class="row" style="top:365px;height:28.8px;background:#fff"></div>
<div class="row" style="top:393.8px;height:25.7px;background:#efefef"></div>
<div class="row" style="top:419.5px;height:25.5px;background:#efefef"></div>
<div class="a" style="left:478.5px;top:419.8px;width:221.2px;height:25.2px;background:#f3cbcd"></div>
<div class="hl" style="left:11px;top:364.7px;width:688.7px"></div>
<div class="hl" style="left:11px;top:393.5px;width:688.7px;background:#e8e8e8"></div>
<div class="hl" style="left:11px;top:419.2px;width:688.7px;background:#e4e4e4"></div>
<div class="vl" style="left:333.2px;top:341px;height:104px"></div>
<div class="vl" style="left:428.2px;top:341px;height:104px"></div>
<div class="vl" style="left:478.1px;top:341px;height:104px"></div>
<div class="vl" style="left:621.2px;top:341px;height:104px"></div>

<div class="tb">
<div class="a" style="left:17.3px;top:349.1px">Поповнення</div>
<div class="a" style="left:339.7px;top:349.1px">Надходження</div>
<div class="a" style="left:467.5px;top:349.1px">L</div>
<div class="a" style="left:484.2px;top:349.1px">Використовується</div>
<div class="a" style="left:627.6px;top:349.1px">Доставка</div>

<div class="a" style="left:17.1px;top:375.1px">Зарезервовано на складі</div>
<div class="a" style="left:455px;top:375.1px">2,83</div>
<div class="a lk" style="left:495.2px;top:375.1px;font-size:9.2px">WH/MO/00088-002</div>
<div class="a" style="left:627.6px;top:375.1px">01.06.2023</div>

<div class="a" style="left:17.1px;top:402.3px">Запаси в наявності</div>
<div class="a" style="left:455px;top:402.3px">4,00</div>
<div class="a lk" style="left:495.2px;top:402.3px;font-size:9.2px">WH/MO/00096</div>
<div class="a" style="left:627.6px;top:402.3px">31.07.2023</div>

<div class="a" style="left:17.1px;top:427.6px;color:#7b7f86">Немає в наявності</div>
<div class="a" style="left:448.8px;top:427.6px">- 2,00</div>
<div class="a lk" style="left:495.2px;top:427.6px;font-size:9.2px">WH/MO/00096</div>
<div class="a" style="left:627.6px;top:427.6px">31.07.2023</div>
</div>
<div class="btn" style="left:121.5px;top:372.1px;width:113px;height:16px"></div>
<div class="a" style="left:125.7px;top:376.6px;font-size:7.6px;color:#f2eff7;-webkit-text-stroke:0.3px currentColor">ВІДМІНИТИ РЕЗЕРВУВАННЯ</div>

<svg width="711" height="446">
  <g fill="none" stroke="#8e9196" stroke-width="0.75">
    <path id="star" d="M489.6 374.4 L491.05 377.5 L494.4 377.85 L491.9 380.1 L492.6 383.5 L489.6 381.8 L486.6 383.5 L487.3 380.1 L484.8 377.85 L488.15 377.5 Z"/>
    <use href="#star" y="27.2"/>
    <use href="#star" y="52.2"/>
  </g>
</svg>

<!-- window bottom -->
<div class="a" style="left:0;top:24.5px;width:1px;height:421px;background:rgba(0,0,0,0.07)"></div>
<div class="a" style="left:0;top:0;width:1px;height:24.5px;background:rgba(0,0,0,0.12)"></div>
<svg width="711" height="446">
  <path d="M0 437.5 Q0.6 444.6 7 444.8 L0 444.8Z" fill="#b5b5b5"/>
  <path d="M711 437.5 Q710.4 444.6 704 444.8 L711 444.8Z" fill="#b5b5b5"/>
  <rect x="0" y="444.6" width="711" height="1.4" fill="#7d7d7d"/>
</svg>
</body></html>
